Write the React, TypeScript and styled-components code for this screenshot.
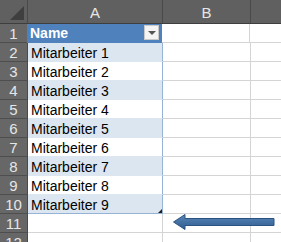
import styled, { createGlobalStyle } from 'styled-components';

const GlobalStyle = createGlobalStyle`
  html, body {
    margin: 0;
    padding: 0;
    background: #ffffff;
    overflow: hidden;
  }
  body {
    font-family: 'Liberation Sans', Arial, sans-serif;
  }
`;

const names = Array.from({ length: 9 }, (_, i) => `Mitarbeiter ${i + 1}`);

export default function App() {
  // ---------------------------------------------
  // computes
  // ---------------------------------------------
  const rows = Array.from({ length: 12 }, (_, i) => i + 1);

  // ---------------------------------------------
  // presentation
  // ---------------------------------------------
  return (
    <>
      <GlobalStyle />
      <Sheet>
        <HeaderRow>
          <Corner>
            <CornerTriangle />
          </Corner>
          <ColHeader width={134}>A</ColHeader>
          <ColHeader width={87}>B</ColHeader>
          <ColHeader width={40} />
        </HeaderRow>

        {rows.map((n) => {
          const isHead = n === 1;
          const isData = n >= 2 && n <= 10;
          const banded = isData && n % 2 === 0;
          return (
            <Row key={'row' + n}>
              <RowHeader>{n}</RowHeader>
              {isHead ? (
                <TableHead>
                  Name
                  <FilterButton>
                    <FilterCaret />
                  </FilterButton>
                </TableHead>
              ) : isData ? (
                <TableCell banded={banded} last={n === 10}>
                  {names[n - 2]}
                  {n === 10 && <ResizeHandle />}
                </TableCell>
              ) : (
                <Cell width={134} />
              )}
              <Cell width={87} />
              <Cell width={40} />
            </Row>
          );
        })}

        <Arrow width="104" height="18" viewBox="0 0 104 18">
          <defs>
            <linearGradient id="shaft" x1="0" y1="0" x2="0" y2="1">
              <stop offset="0" stopColor="#5a87b8" />
              <stop offset="1" stopColor="#2f5c8f" />
            </linearGradient>
          </defs>
          <path
            d="M1.5 9 L13 1.5 L13 5.5 L102 5.5 L102 12.5 L13 12.5 L13 16.5 Z"
            fill="url(#shaft)"
            stroke="#2c5283"
            strokeWidth="1"
            strokeLinejoin="miter"
          />
        </Arrow>
      </Sheet>
    </>
  );
}

const Sheet = styled.div`
  position: relative;
  width: 281px;
  height: 242px;
  overflow: hidden;
  display: flex;
  flex-direction: column;
`;

const HeaderRow = styled.div`
  display: flex;
  height: 24px;
  flex: none;
  background: #606060;
  border-bottom: 1px solid #3e3e3e;
  box-sizing: border-box;
`;

const Corner = styled.div`
  position: relative;
  width: 28px;
  flex: none;
  border-right: 1px solid #4a4a4a;
  box-sizing: border-box;
`;

const CornerTriangle = styled.div`
  position: absolute;
  right: 3px;
  bottom: 3px;
  width: 0;
  height: 0;
  border-left: 14px solid transparent;
  border-bottom: 14px solid #3f3f3f;
`;

const ColHeader = styled.div<{ width: number }>`
  width: ${({ width }) => width}px;
  flex: none;
  display: flex;
  align-items: center;
  justify-content: center;
  padding-top: 1px;
  color: #e6e6e6;
  font-size: 15px;
  border-right: 1px solid #4a4a4a;
  box-sizing: content-box;
`;

const Row = styled.div`
  display: flex;
  height: 19px;
  flex: none;
`;

const RowHeader = styled.div`
  width: 28px;
  flex: none;
  box-sizing: border-box;
  background: #676767;
  border-right: 1px solid #4a4a4a;
  border-bottom: 1px solid #4e4e4e;
  color: #e6e6e6;
  font-size: 15px;
  display: flex;
  align-items: center;
  justify-content: center;
  padding-top: 1px;
`;

const Cell = styled.div<{ width: number }>`
  width: ${({ width }) => width}px;
  flex: none;
  border-right: 1px solid #d4d4d4;
  border-bottom: 1px solid #d4d4d4;
`;

const TableHead = styled.div`
  position: relative;
  width: 133px;
  flex: none;
  background: #4f81bd;
  border-right: 1px solid #4f81bd;
  border-bottom: 1px solid #4f81bd;
  color: #ffffff;
  font-weight: bold;
  font-size: 14px;
  display: flex;
  align-items: center;
  padding-left: 2px;
  box-sizing: content-box;
  margin-left: -1px;
  padding-left: 3px;
  width: 131px;
`;

const FilterButton = styled.div`
  position: absolute;
  right: 2px;
  top: 1px;
  width: 15px;
  height: 15px;
  box-sizing: border-box;
  background: #f4f4f4;
  border: 1px solid #c8c8c8;
  display: flex;
  align-items: center;
  justify-content: center;
`;

const FilterCaret = styled.div`
  width: 0;
  height: 0;
  border-left: 4px solid transparent;
  border-right: 4px solid transparent;
  border-top: 4px solid #555555;
  margin-top: 1px;
`;

const TableCell = styled.div<{ banded: boolean; last: boolean }>`
  position: relative;
  width: 131px;
  padding-left: 3px;
  flex: none;
  background: ${({ banded }) => (banded ? '#dce6f1' : '#ffffff')};
  border-right: 1px solid #95b3d7;
  border-bottom: 1px solid
    ${({ last }) => (last ? '#95b3d7' : '#dce6f1')};
  color: #000000;
  font-size: 14px;
  display: flex;
  align-items: center;
  padding-top: 1px;
  box-sizing: content-box;
  height: 17px;
`;

const ResizeHandle = styled.div`
  position: absolute;
  right: 0;
  bottom: 0;
  width: 0;
  height: 0;
  border-left: 4px solid transparent;
  border-bottom: 4px solid #1f1f1f;
`;

const Arrow = styled.svg`
  position: absolute;
  left: 172px;
  top: 213px;
`;
